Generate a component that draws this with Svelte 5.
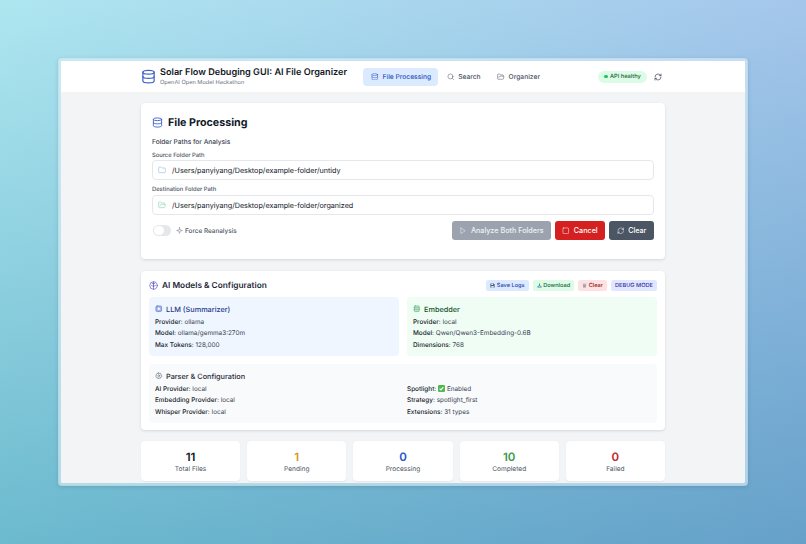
<script>
  const icons = {
    db: '<ellipse cx="12" cy="5" rx="9" ry="3"/><path d="M3 5v14c0 1.7 4 3 9 3s9-1.300 9-3V5"/><path d="M3 12c0 1.700 4 3 9 3s9-1.300 9-3"/>',
    search: '<circle cx="11" cy="11" r="8"/><path d="m21 21-4.300-4.300"/>',
    folderOpen: '<path d="m6 14 1.500-2.900A2 2 0 0 1 9.240 10H20a2 2 0 0 1 1.940 2.500l-1.540 6a2 2 0 0 1-1.950 1.500H4a2 2 0 0 1-2-2V5a2 2 0 0 1 2-2h3.900a2 2 0 0 1 1.690.900l.81 1.200a2 2 0 0 0 1.670.900H18a2 2 0 0 1 2 2v2"/>',
    folder: '<path d="M20 20a2 2 0 0 0 2-2V8a2 2 0 0 0-2-2h-7.900a2 2 0 0 1-1.690-.900L9.600 3.900A2 2 0 0 0 7.930 3H4a2 2 0 0 0-2 2v13a2 2 0 0 0 2 2Z"/>',
    refresh: '<path d="M3 12a9 9 0 0 1 9-9 9.750 9.750 0 0 1 6.740 2.740L21 8"/><path d="M21 3v5h-5"/><path d="M21 12a9 9 0 0 1-9 9 9.750 9.750 0 0 1-6.740-2.740L3 16"/><path d="M8 16H3v5"/>',
    play: '<polygon points="6 3 20 12 6 21 6 3"/>',
    square: '<rect x="3" y="3" width="18" height="18" rx="2"/>',
    zap: '<path d="M12 2 14 10 22 12 14 14 12 22 10 14 2 12 10 10Z"/>',
    brain: '<circle cx="12" cy="12" r="10"/><path d="M12 2v20"/><path d="M12 8 8 6M12 8l4-2M12 14l-5-2M12 14l5-2"/>',
    cpu: '<rect x="3" y="3" width="18" height="18" rx="4" fill="currentColor" fill-opacity=".45"/><rect x="9" y="9" width="6" height="6" rx="1" fill="#fff" stroke="none"/>',
    embed: '<rect x="4" y="3" width="16" height="18" rx="3" fill="currentColor" fill-opacity=".2"/><path d="M4 9h16M4 15h16"/>',
    gear: '<circle cx="12" cy="12" r="3"/><path d="M12 2l2 3 3.500-.800.800 3.500 3.500 2L20 12l1.800 2.300-3.500 2-.800 3.500L14 19l-2 3-2-3-3.500.800-.800-3.500-3.500-2L4 12 2.200 9.700l3.500-2 .800-3.500L10 5Z"/>'
  };
  const stats = [
    { v: '11', l: 'Total Files', c: 'n-dark' },
    { v: '1', l: 'Pending', c: 'n-amber' },
    { v: '0', l: 'Processing', c: 'n-blue' },
    { v: '10', l: 'Completed', c: 'n-green' },
    { v: '0', l: 'Failed', c: 'n-red' }
  ];
</script>

{#snippet ic(name, cls)}
  <svg class={'ico ' + cls} viewBox="0 0 24 24" aria-hidden="true">{@html icons[name]}</svg>
{/snippet}

{#snippet kv(k, v)}
  <div class="kv"><b>{k}:</b> {v}</div>
{/snippet}

<div class="stage">
  <div class="window">
    <header class="top">
      <div class="brand">
        {@render ic('db', 'logo')}
        <div class="brand-text">
          <div class="app-title">Solar Flow Debuging GUI: AI File Organizer</div>
          <div class="app-sub">OpenAI Open Model Hackathon</div>
        </div>
      </div>
      <nav class="nav">
        <div class="tab active">{@render ic('db', 'tab-ic')}<span>File Processing</span></div>
        <div class="tab">{@render ic('search', 'tab-ic')}<span>Search</span></div>
        <div class="tab">{@render ic('folderOpen', 'tab-ic')}<span>Organizer</span></div>
      </nav>
      <div class="status"><i class="dot"></i>API healthy</div>
      {@render ic('refresh', 'top-refresh')}
    </header>

    <main class="main">
      <section class="card fp">
        <h1 class="fp-title">{@render ic('db', 'fp-ic')}File Processing</h1>
        <div class="group-label">Folder Paths for Analysis</div>
        <div class="field-label">Source Folder Path</div>
        <div class="input">{@render ic('folder', 'in-blue')}<span>/Users/panyiyang/Desktop/example-folder/untidy</span></div>
        <div class="field-label second">Destination Folder Path</div>
        <div class="input">{@render ic('folderOpen', 'in-green')}<span>/Users/panyiyang/Desktop/example-folder/organized</span></div>
        <div class="actions">
          <div class="toggle"><i></i></div>
          {@render ic('zap', 'zap')}
          <span class="force">Force Reanalysis</span>
          <div class="spacer"></div>
          <button class="btn b-analyze">{@render ic('play', 'btn-ic')}Analyze Both Folders</button>
          <button class="btn b-cancel">{@render ic('square', 'btn-ic')}Cancel</button>
          <button class="btn b-clear">{@render ic('refresh', 'btn-ic')}Clear</button>
        </div>
      </section>

      <section class="card cfg">
        <div class="cfg-head">
          {@render ic('brain', 'brain')}
          <h2>AI Models &amp; Configuration</h2>
          <div class="spacer"></div>
          <span class="chip c-blue"><svg class="mini" viewBox="0 0 12 12"><path fill="#4b5a78" d="M1 1h8l2 2v8H1z"/><path fill="#dbeafe" d="M3 1.500h4.500v3H3zM3 7h6v3.500H3z"/></svg>Save Logs</span>
          <span class="chip c-green"><svg class="mini" viewBox="0 0 12 12"><path fill="#3f8f5f" d="M5 1h2v4h2L6 8 3 5h2z"/><path fill="#3b82c4" d="M1 8h3l2 1.500L8 8h3v3H1z"/></svg>Download</span>
          <span class="chip c-red"><svg class="mini" viewBox="0 0 12 12"><path fill="#9ca3af" d="M1.500 2h9v1.500h-9zM2.500 4h7v7h-7z"/></svg>Clear</span>
          <span class="chip c-violet">DEBUG MODE</span>
        </div>
        <div class="models">
          <div class="panel p-blue">
            <div class="panel-title t-blue">{@render ic('cpu', 'panel-ic ic-blue')}LLM (Summarizer)</div>
            {@render kv('Provider', 'ollama')}
            {@render kv('Model', 'ollama/gemma3:270m')}
            {@render kv('Max Tokens', '128,000')}
          </div>
          <div class="panel p-green">
            <div class="panel-title t-green">{@render ic('embed', 'panel-ic ic-green')}Embedder</div>
            {@render kv('Provider', 'local')}
            {@render kv('Model', 'Qwen/Qwen3-Embedding-0.6B')}
            {@render kv('Dimensions', '768')}
          </div>
        </div>
        <div class="panel p-gray">
          <div class="panel-title t-gray">{@render ic('gear', 'panel-ic ic-gray')}Parser &amp; Configuration</div>
          <div class="parser-grid">
            <div>
              {@render kv('AI Provider', 'local')}
              {@render kv('Embedding Provider', 'local')}
              {@render kv('Whisper Provider', 'local')}
            </div>
            <div>
              <div class="kv"><b>Spotlight:</b> <svg class="check" viewBox="0 0 12 12"><rect width="12" height="12" rx="2" fill="#4fb84f"/><path d="M2.800 6.200 5 8.500 9.300 3.500" fill="none" stroke="#fff" stroke-width="1.800"/></svg> Enabled</div>
              {@render kv('Strategy', 'spotlight_first')}
              {@render kv('Extensions', '31 types')}
            </div>
          </div>
        </div>
      </section>

      <section class="stats">
        {#each stats as s}
          <div class="stat">
            <div class={'num ' + s.c}>{s.v}</div>
            <div class="lab">{s.l}</div>
          </div>
        {/each}
      </section>
    </main>
  </div>
</div>

<style>
  :global(body) {
    margin: 0;
    font-family: Inter, "Liberation Sans", sans-serif;
    text-rendering: geometricPrecision;
  }
  .stage {
    width: 806px;
    height: 544px;
    box-sizing: border-box;
    padding: 58px 58px 0;
    overflow: hidden;
    background-image:
      linear-gradient(to right, #fff, #f1dcfa),
      linear-gradient(to bottom, #aee6f0, #6cbace);
    background-blend-mode: multiply;
  }
  .window {
    width: 690px;
    height: 428px;
    box-sizing: border-box;
    border: 3px solid rgba(225, 240, 248, 0.6);
    border-radius: 4px;
    overflow: hidden;
    background: #f3f4f6;
    background-clip: padding-box;
    box-shadow: 0 1px 4px rgba(40, 80, 110, 0.2);
  }
  .ico {
    display: block;
    flex: none;
    fill: none;
    stroke: currentColor;
    stroke-width: 2;
    stroke-linecap: round;
    stroke-linejoin: round;
  }
  .top {
    height: 31px;
    background: #fff;
    display: flex;
    align-items: center;
    padding-left: 80px;
  }
  .brand { display: flex; align-items: center; width: 222px; }
  .logo { width: 15px; height: 15px; color: #3f63c8; margin-right: 4px; }
  .app-title { font-size: 9.150px; font-weight: 600; color: #111827; line-height: 12px; white-space: nowrap; }
  .app-sub { font-size: 5.650px; color: #6b7280; line-height: 8px; white-space: nowrap; }
  .nav { display: flex; align-items: center; gap: 1px; }
  .tab {
    display: flex;
    align-items: center;
    gap: 4px;
    height: 18px;
    padding: 0 8px 0 7.500px;
    border-radius: 4px;
    font-size: 6.700px;
    font-weight: 500;
    color: #4b5563;
    white-space: nowrap;
  }
  .tab.active { background: #dbeafe; color: #2f55c4; padding: 0 7px 0 8px; }
  .tab-ic { width: 7.500px; height: 7.500px; stroke-width: 1.600; }
  .status {
    margin-left: 50px;
    display: flex;
    align-items: center;
    gap: 2.500px;
    height: 12px;
    padding: 0 6px;
    border-radius: 6px;
    background: #dcfce7;
    color: #166534;
    font-size: 5.700px;
    font-weight: 500;
    white-space: nowrap;
  }
  .dot { width: 3.500px; height: 3.500px; border-radius: 50%; background: #22c55e; }
  .top-refresh { width: 8px; height: 8px; color: #374151; margin-left: 7.500px; }

  .main {
    padding: 11px 0 0 80px;
    width: 524px;
    box-sizing: content-box;
  }
  .card {
    background: #fff;
    border-radius: 4px;
    box-sizing: border-box;
    box-shadow: 0 1px 3px rgba(0, 0, 0, 0.12);
  }
  .fp { height: 156px; padding: 11px 11px 0; margin-bottom: 12px; }
  .fp-title {
    margin: 0 0 8px;
    display: flex;
    align-items: center;
    gap: 5px;
    font-size: 10.700px;
    line-height: 15px;
    font-weight: 700;
    color: #111827;
    padding-top: 1px;
  }
  .fp-ic { width: 11px; height: 11px; color: #3f63c8; }
  .group-label { font-size: 6.600px; line-height: 9px; font-weight: 500; color: #374151; margin-bottom: 5px; }
  .field-label { font-size: 5.800px; line-height: 8px; font-weight: 500; color: #4b5563; }
  .field-label.second { margin-top: 5px; padding-top: 1px; margin-bottom: 1px; }
  .input {
    height: 20px;
    box-sizing: border-box;
    border: 1px solid #e5e7eb;
    border-radius: 4px;
    display: flex;
    align-items: center;
    padding-left: 5px;
    gap: 6px;
    font-size: 7.200px;
    color: #111827;
    white-space: nowrap;
  }
  .in-blue { width: 8px; height: 8px; color: #7fa6e0; stroke-width: 1.500; }
  .in-green { width: 8px; height: 8px; color: #6fcf97; stroke-width: 1.500; }
  .actions { display: flex; align-items: center; margin-top: 6px; height: 19px; }
  .toggle { width: 18px; height: 11.500px; border-radius: 6px; background: #e5e7eb; position: relative; margin-left: 1px; }
  .toggle i { position: absolute; left: 1px; top: 1px; width: 9.500px; height: 9.500px; border-radius: 50%; background: #fff; }
  .zap { width: 7px; height: 7px; color: #6b7280; margin-left: 5px; stroke-width: 1.600; }
  .force { font-size: 6.400px; font-weight: 500; color: #4b5563; margin-left: 2px; white-space: nowrap; }
  .spacer { flex: 1; }
  .btn {
    height: 19px;
    border: 0;
    border-radius: 3px;
    display: flex;
    align-items: center;
    justify-content: center;
    gap: 4px;
    padding: 0;
    color: #fff;
    font-family: inherit;
    font-size: 7.200px;
    font-weight: 500;
    white-space: nowrap;
    margin-left: 4px;
  }
  .btn-ic { width: 7.500px; height: 7.500px; stroke-width: 1.600; }
  .b-analyze { width: 99px; background: #9ca3af; color: #f0f1f4; }
  .b-cancel { width: 50px; background: #d42020; }
  .b-clear { width: 45px; background: #4b5563; }

  .cfg { height: 159px; padding: 8px; margin-bottom: 11px; }
  .cfg-head { display: flex; align-items: center; height: 12px; margin-bottom: 6px; padding-top: 0; }
  .brain { width: 9px; height: 9px; color: #5a4fc8; margin-right: 4px; stroke-width: 1.800; }
  .cfg-head h2 { margin: 0; padding-top: 1px; font-size: 8.300px; font-weight: 600; color: #1f2937; white-space: nowrap; }
  .chip {
    display: flex;
    align-items: center;
    gap: 1.500px;
    height: 11px;
    padding: 1px 4px 0;
    box-sizing: border-box;
    border-radius: 2.500px;
    font-size: 5.650px;
    font-weight: 500;
    margin-left: 4px;
    white-space: nowrap;
  }
  .mini { width: 5px; height: 5px; display: block; }
  .c-blue { background: #dbeafe; color: #1e40af; }
  .c-green { background: #dcfce7; color: #166534; }
  .c-red { background: #fee2e2; color: #991b1b; }
  .c-violet { background: #e0e7ff; color: #3730a3; }
  .models { display: grid; grid-template-columns: 250px 250px; gap: 8px; margin-bottom: 8px; }
  .panel { height: 59px; box-sizing: border-box; border-radius: 4px; padding: 6px 6px 0; }
  .p-blue { background: #eff6ff; }
  .p-green { background: #f0fdf4; }
  .p-gray { background: #f9fafb; }
  .panel-title { display: flex; align-items: center; gap: 3.500px; height: 12px; font-size: 7.300px; font-weight: 500; margin-bottom: 2px; white-space: nowrap; }
  .panel-ic { width: 7.500px; height: 7.500px; stroke-width: 2; }
  .t-blue { color: #1e3a8a; }
  .t-green { color: #14532d; }
  .t-gray { color: #1f2937; }
  .ic-blue { color: #4f6ed0; }
  .ic-green { color: #4caf72; }
  .ic-gray { color: #6b7280; }
  .kv { font-size: 6.400px; line-height: 11.400px; color: #374151; white-space: nowrap; }
  .kv b { font-weight: 500; color: #111827; }
  .parser-grid { display: grid; grid-template-columns: 252px 1fr; margin-top: 0; }
  .check { width: 7px; height: 7px; display: inline-block; vertical-align: -1px; }

  .stats { display: grid; grid-template-columns: repeat(5, 1fr); gap: 7px; }
  .stat {
    height: 40px;
    background: #fff;
    border-radius: 4px;
    display: flex;
    flex-direction: column;
    align-items: center;
    padding-top: 9px;
    box-sizing: border-box;
    box-shadow: 0 0.500px 1.500px rgba(0, 0, 0, 0.06);
  }
  .num { font-size: 11.500px; line-height: 14px; font-weight: 600; }
  .lab { font-size: 6.600px; line-height: 9px; color: #4b5563; margin-top: 1px; }
  .n-dark { color: #111827; }
  .n-amber { color: #d49a1a; }
  .n-blue { color: #2a52c9; }
  .n-green { color: #3a9a4a; }
  .n-red { color: #c0282a; }
</style>
